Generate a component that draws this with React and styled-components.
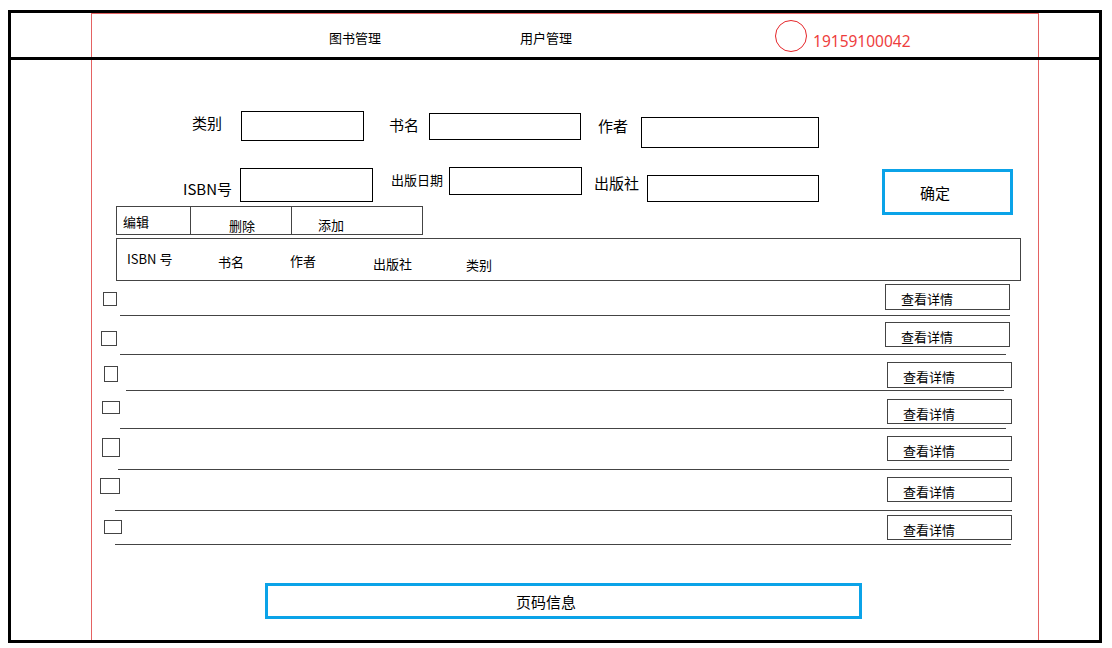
import React from 'react';
import styled, { createGlobalStyle } from 'styled-components';

const GlobalStyle = createGlobalStyle`
  body {
    margin: 0;
    background: #fff;
    color: #000;
    font-family: "Noto Sans CJK SC", "Noto Sans", sans-serif;
  }
`;

const Frame = styled.div`
  position: relative;
  box-sizing: border-box;
  width: 1094px;
  height: 633px;
  margin: 10px 0 0 8px;
  border: 3px solid #000;
`;

// the red guide rectangle of the wireframe, drawn under everything
const Guide = styled.div`
  position: absolute;
  z-index: -1;
  left: 80px;
  top: 0;
  box-sizing: border-box;
  width: 948px;
  height: 631px;
  border: 1px solid #e46262;
`;

const Header = styled.div`
  display: flex;
  align-items: flex-start;
  height: 44px;
  border-bottom: 3px solid #000;
`;

const NavLink = styled.span`
  flex: none;
  margin: 16px 0 0 ${p => p.$ml}px;
  font-size: 13px;
  line-height: 18px;
  white-space: nowrap;
  cursor: pointer;
`;

const Avatar = styled.div`
  flex: none;
  box-sizing: border-box;
  width: 32px;
  height: 32px;
  margin: 7px 0 0 203px;
  border: 1px solid #e5262a;
  border-radius: 50%;
`;

const Phone = styled.span`
  flex: none;
  margin: 18px 0 0 6px;
  font-family: "Noto Sans", sans-serif;
  font-size: 15.5px;
  line-height: 20px;
  color: #ee3d3d;
`;

const FormRow = styled.div`
  display: flex;
  align-items: flex-start;
  margin-top: ${p => p.$mt}px;
`;

const Label = styled.span`
  flex: none;
  width: ${p => p.$w}px;
  margin: ${p => p.$mt || 0}px 0 0 ${p => p.$ml}px;
  font-size: ${p => p.$size || 15}px;
  line-height: ${p => (p.$size || 15) + 5}px;
  white-space: nowrap;
`;

const Field = styled.input`
  flex: none;
  box-sizing: border-box;
  width: ${p => p.$w}px;
  height: ${p => p.$h}px;
  margin: ${p => p.$mt || 0}px 0 0 ${p => p.$ml}px;
  padding: 0 4px;
  border: 1px solid #000;
  background: transparent;
  font: inherit;
  font-size: 13px;
  outline: none;
`;

const ConfirmButton = styled.div`
  flex: none;
  display: flex;
  align-items: center;
  box-sizing: border-box;
  width: 131px;
  height: 46px;
  margin: 2px 0 0 63px;
  padding: 2px 0 0 35px;
  border: 3px solid #0ba3e8;
  font-size: 15px;
  line-height: 20px;
  cursor: pointer;
`;

const Toolbar = styled.div`
  display: flex;
  box-sizing: border-box;
  width: 307px;
  height: 29px;
  margin: -9px 0 0 105px;
  border: 1px solid #444;
`;

const ToolCell = styled.div`
  flex: none;
  box-sizing: border-box;
  width: ${p => p.$w}px;
  padding: ${p => p.$pt}px 0 0 ${p => p.$pl}px;
  border-left: ${p => (p.$first ? 'none' : '1px solid #444')};
  font-size: 13px;
  line-height: 18px;
  white-space: nowrap;
  cursor: pointer;
`;

const TableHead = styled.div`
  display: flex;
  align-items: flex-start;
  box-sizing: border-box;
  width: 905px;
  height: 43px;
  margin: 3px 0 0 105px;
  padding-left: 10px;
  border: 1px solid #444;
`;

const HeadCell = styled.span`
  flex: none;
  width: ${p => p.$w}px;
  margin-top: ${p => p.$mt}px;
  font-size: 13px;
  line-height: 18px;
  white-space: nowrap;
`;

const Row = styled.div`
  margin-top: ${p => p.$mt}px;
`;

const RowTop = styled.div`
  display: flex;
  align-items: flex-start;
`;

const Check = styled.div`
  flex: none;
  box-sizing: border-box;
  width: ${p => p.$w}px;
  height: ${p => p.$h}px;
  margin: ${p => p.$mt}px 0 0 ${p => p.$ml}px;
  border: 1px solid #444;
`;

const DetailButton = styled.div`
  flex: none;
  box-sizing: border-box;
  width: 125px;
  height: ${p => p.$h}px;
  margin-left: ${p => p.$ml}px;
  padding: 5px 0 0 15px;
  border: 1px solid #444;
  font-size: 13px;
  line-height: 18px;
  white-space: nowrap;
  cursor: pointer;
`;

const Rule = styled.div`
  width: ${p => p.$w}px;
  height: 1px;
  margin: ${p => p.$mt}px 0 0 ${p => p.$ml}px;
  background: #444;
`;

const Pager = styled.div`
  display: flex;
  align-items: center;
  box-sizing: border-box;
  width: 597px;
  height: 36px;
  margin: 38px 0 0 254px;
  padding: 2px 0 0 248px;
  border: 3px solid #0ba3e8;
  font-size: 15px;
  line-height: 20px;
`;

const rows = [
  { mt: 3, cb: { ml: 92, mt: 8, w: 14, h: 14 }, btn: { ml: 768, h: 26 }, line: { mt: 5, ml: 109, w: 890 } },
  { mt: 6, cb: { ml: 90, mt: 9, w: 16, h: 15 }, btn: { ml: 768, h: 25 }, line: { mt: 7, ml: 109, w: 886 } },
  { mt: 7, cb: { ml: 93, mt: 4, w: 14, h: 16 }, btn: { ml: 769, h: 26 }, line: { mt: 2, ml: 115, w: 878 } },
  { mt: 8, cb: { ml: 91, mt: 2, w: 18, h: 13 }, btn: { ml: 767, h: 25 }, line: { mt: 4, ml: 109, w: 886 } },
  { mt: 7, cb: { ml: 91, mt: 2, w: 18, h: 19 }, btn: { ml: 767, h: 25 }, line: { mt: 8, ml: 107, w: 891 } },
  { mt: 7, cb: { ml: 89, mt: 1, w: 20, h: 16 }, btn: { ml: 767, h: 25 }, line: { mt: 8, ml: 104, w: 897 } },
  { mt: 4, cb: { ml: 93, mt: 5, w: 18, h: 14 }, btn: { ml: 765, h: 25 }, line: { mt: 4, ml: 104, w: 896 } },
];

export default function App() {
  return (
    <>
      <GlobalStyle />
      <Frame>
        <Guide />
        <Header>
          <NavLink $ml={318}>图书管理</NavLink>
          <NavLink $ml={139}>用户管理</NavLink>
          <Avatar />
          <Phone>19159100042</Phone>
        </Header>

        <FormRow $mt={51}>
          <Label $w={30} $ml={181} $mt={2}>类别</Label>
          <Field $w={123} $h={30} $ml={19} />
          <Label $w={30} $ml={25} $mt={4}>书名</Label>
          <Field $w={152} $h={27} $ml={10} $mt={2} />
          <Label $w={30} $ml={17} $mt={5}>作者</Label>
          <Field $w={178} $h={31} $ml={13} $mt={6} />
        </FormRow>

        <FormRow $mt={19}>
          <Label $w={50} $ml={172} $mt={12}>ISBN号</Label>
          <Field $w={133} $h={34} $ml={7} $mt={1} />
          <Label $w={52} $ml={18} $mt={4} $size={13}>出版日期</Label>
          <Field $w={133} $h={28} $ml={6} />
          <Label $w={45} $ml={12} $mt={6}>出版社</Label>
          <Field $w={172} $h={27} $ml={8} $mt={8} />
          <ConfirmButton>确定</ConfirmButton>
        </FormRow>

        <Toolbar>
          <ToolCell $first $w={73} $pl={6} $pt={6}>编辑</ToolCell>
          <ToolCell $w={101} $pl={38} $pt={10}>删除</ToolCell>
          <ToolCell $w={131} $pl={26} $pt={9}>添加</ToolCell>
        </Toolbar>

        <TableHead>
          <HeadCell $w={91} $mt={11}>ISBN 号</HeadCell>
          <HeadCell $w={72} $mt={14}>书名</HeadCell>
          <HeadCell $w={83} $mt={13}>作者</HeadCell>
          <HeadCell $w={93} $mt={16}>出版社</HeadCell>
          <HeadCell $w={60} $mt={17}>类别</HeadCell>
        </TableHead>

        {rows.map((r, i) => (
          <Row key={i} $mt={r.mt}>
            <RowTop>
              <Check $ml={r.cb.ml} $mt={r.cb.mt} $w={r.cb.w} $h={r.cb.h} />
              <DetailButton $ml={r.btn.ml} $h={r.btn.h}>查看详情</DetailButton>
            </RowTop>
            <Rule $mt={r.line.mt} $ml={r.line.ml} $w={r.line.w} />
          </Row>
        ))}

        <Pager>页码信息</Pager>
      </Frame>
    </>
  );
}
